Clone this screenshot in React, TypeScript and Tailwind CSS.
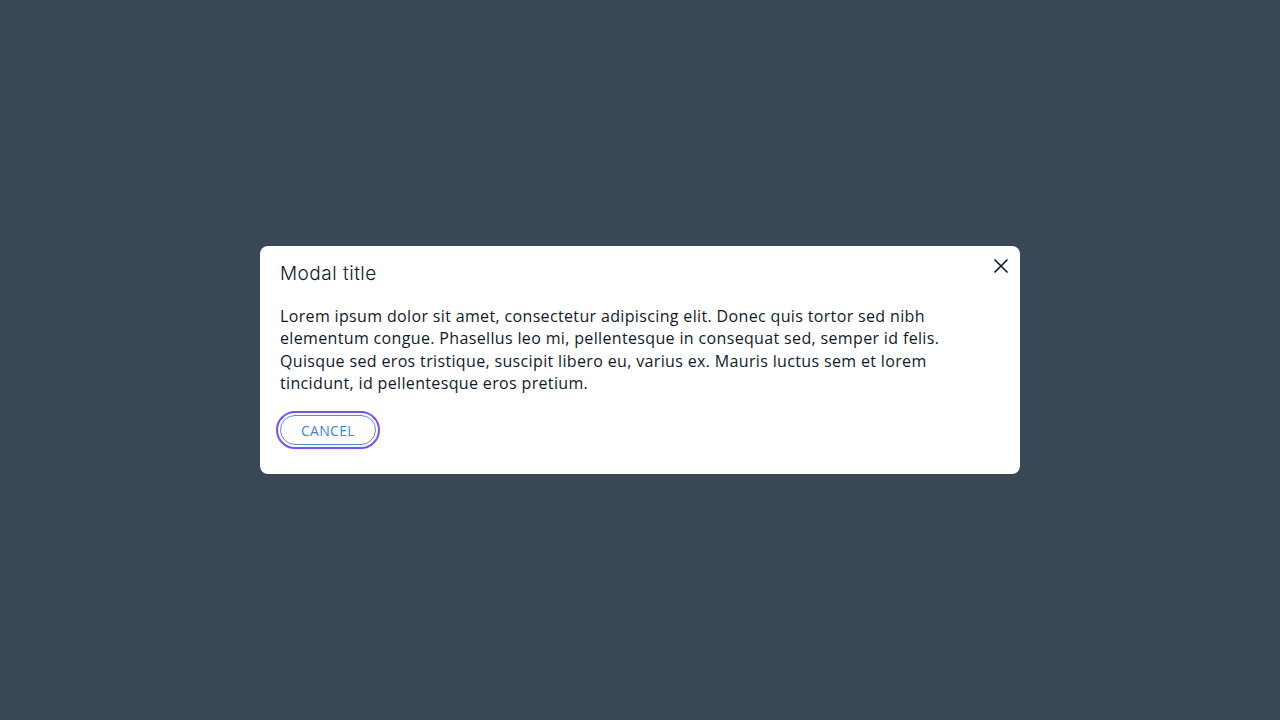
export default function App() {
  return (
    <div className="flex min-h-screen items-center justify-center bg-[#394756]">
      <div className="relative w-[760px] rounded-lg bg-white px-5 pt-[14px] pb-[29px] text-[#0e1a2b]">
        <button className="absolute right-[7px] top-[8px] flex h-6 w-6 items-center justify-center text-[#0e1a2b]">
          <svg width="16" height="16" viewBox="0 0 16 16" fill="none" stroke="currentColor" strokeWidth="1.6">
            <path d="M1.5 1.5L14.5 14.5M14.5 1.5L1.5 14.5" />
          </svg>
        </button>
        <h2 className="text-[19px] font-light leading-[28px] tracking-[0.5px] [font-family:Inter,'Liberation_Sans',sans-serif]">
          Modal title
        </h2>
        <p className="mt-[17px] max-w-[690px] text-[16px] leading-[22.4px] tracking-[0.35px] [font-family:'Open_Sans',sans-serif]">
          Lorem ipsum dolor sit amet, consectetur adipiscing elit. Donec quis tortor sed nibh elementum congue. Phasellus leo mi, pellentesque in consequat sed, semper id felis. Quisque sed eros tristique, suscipit libero eu, varius ex. Mauris luctus sem et lorem tincidunt, id pellentesque eros pretium.
        </p>
        <div className="mt-[21px]">
          <button className="h-[30px] rounded-full border border-[#4a8ff0] bg-white px-5 text-[14px] tracking-[0.3px] text-[#3a7fe8] outline-2 outline-offset-[2px] outline-[#7c4dff] [font-family:'Open_Sans',sans-serif] outline">
            CANCEL
          </button>
        </div>
      </div>
    </div>
  )
}
